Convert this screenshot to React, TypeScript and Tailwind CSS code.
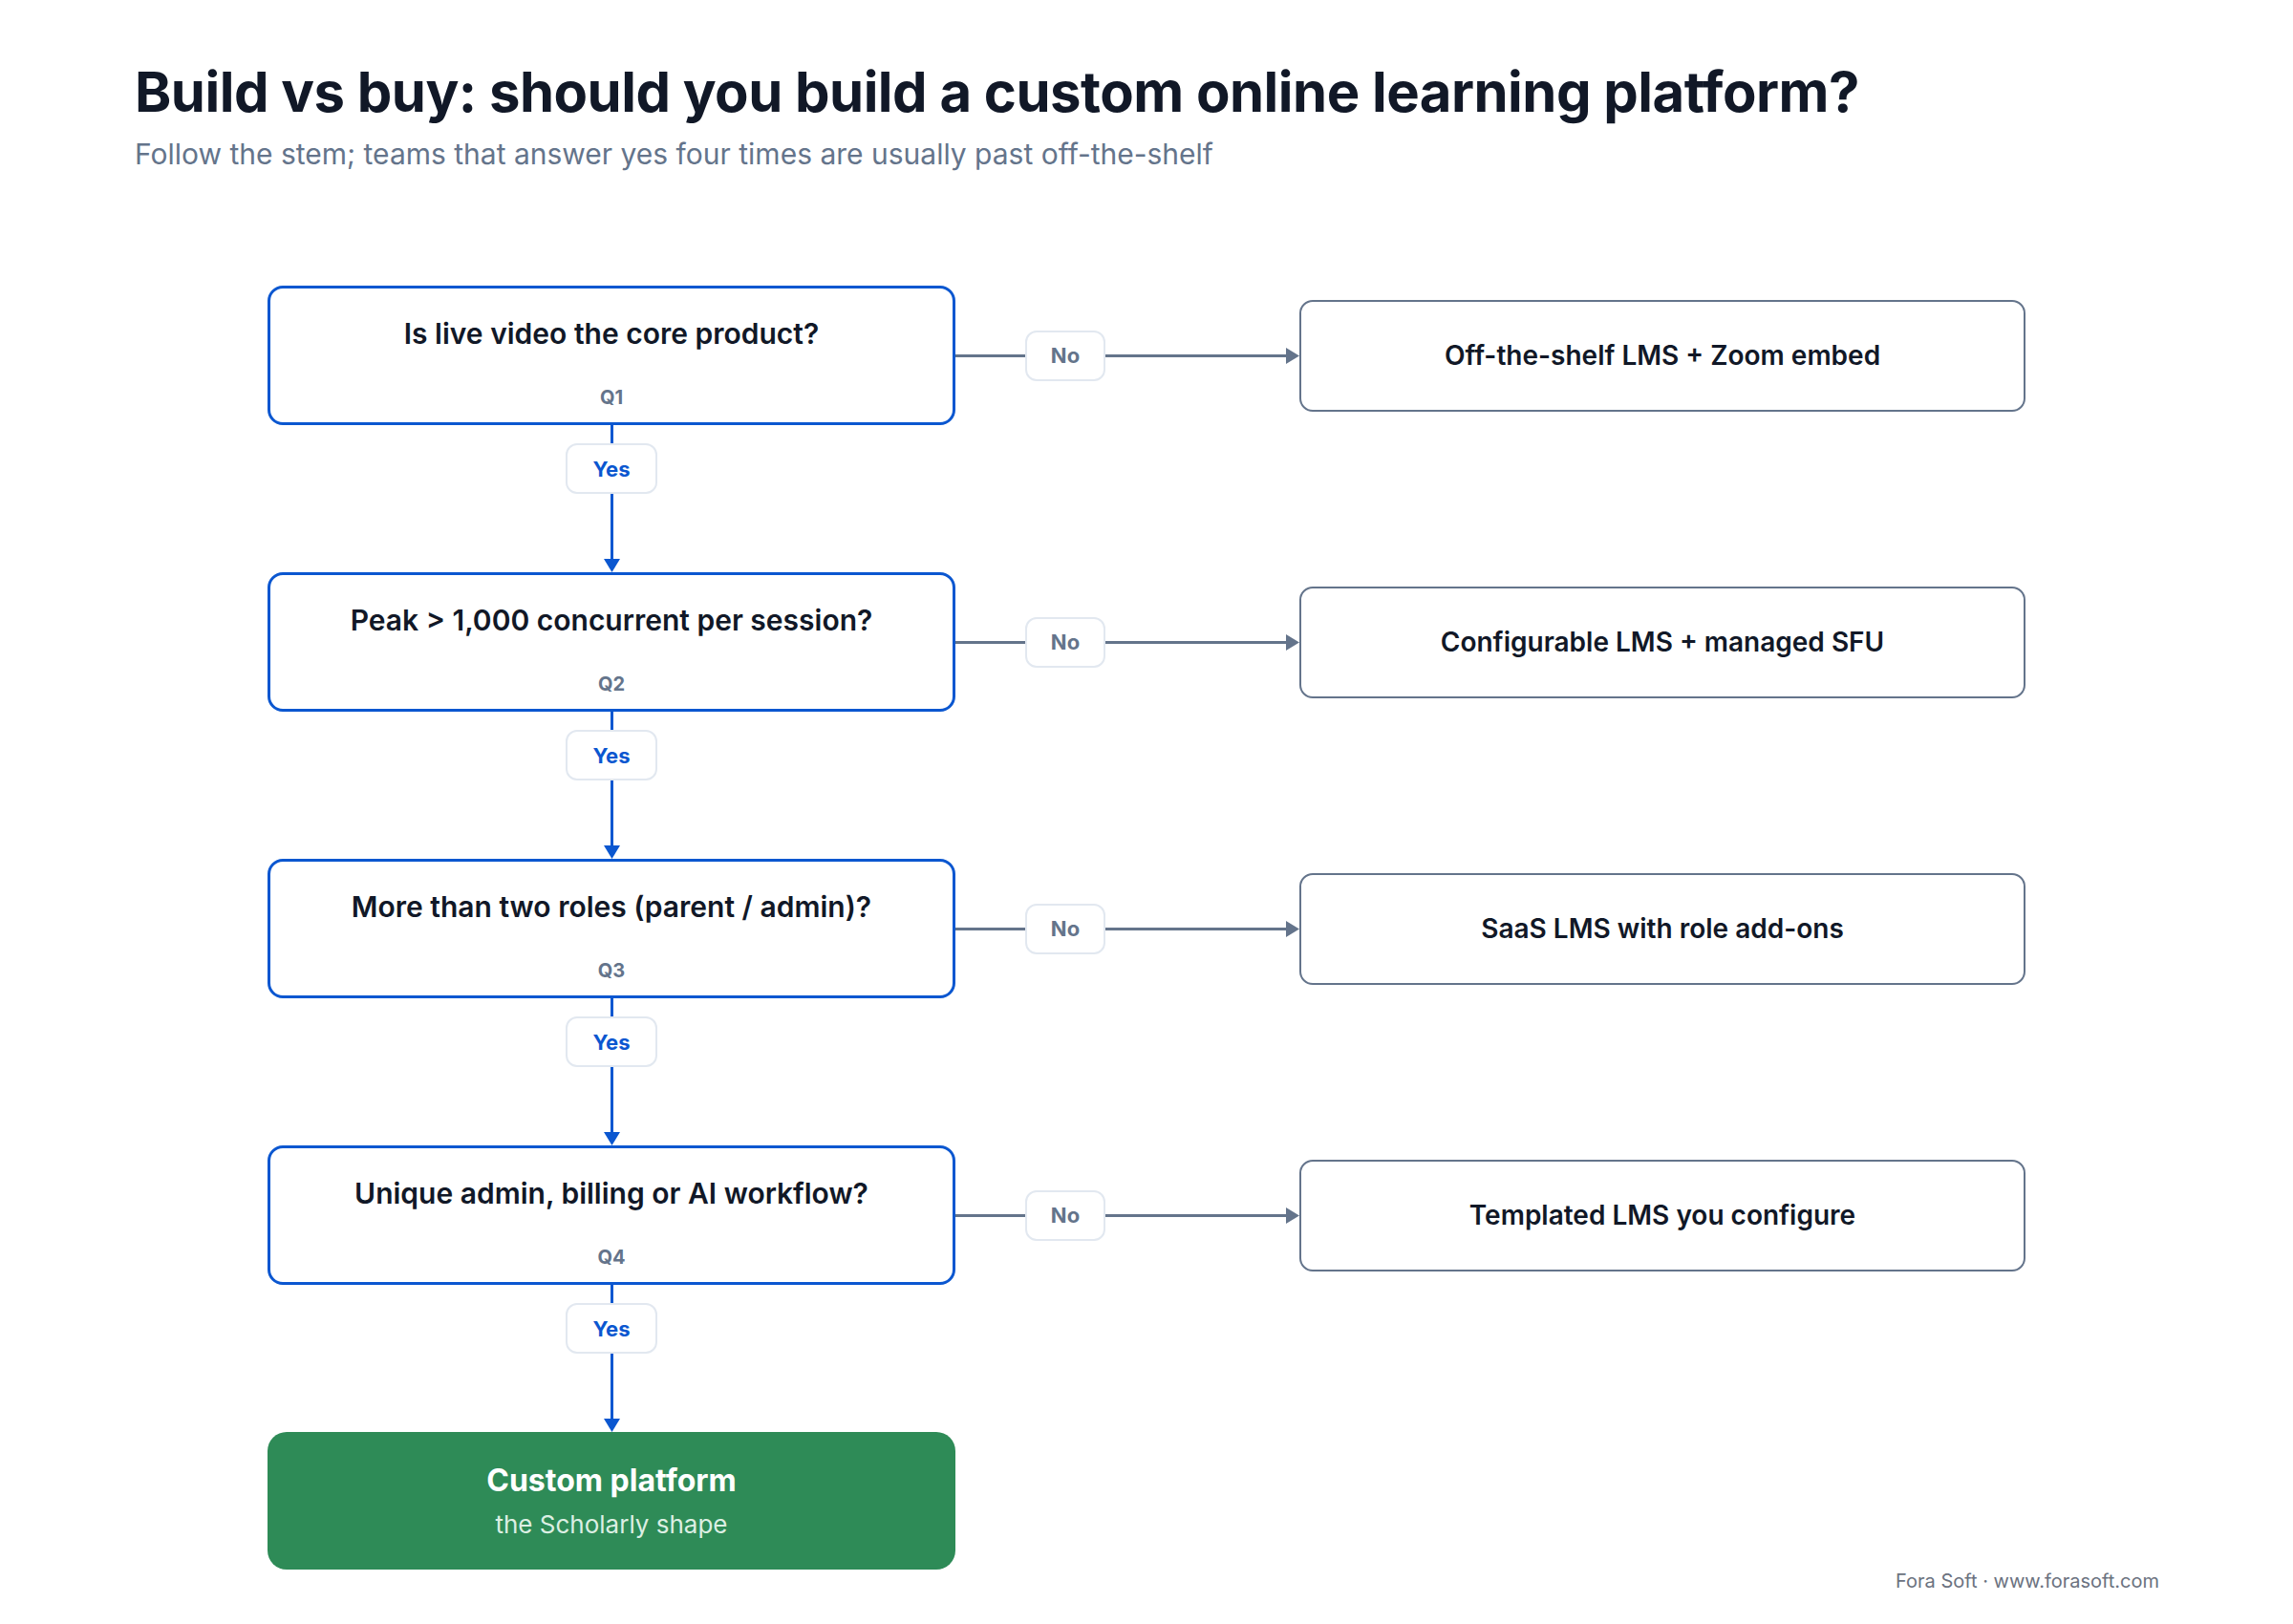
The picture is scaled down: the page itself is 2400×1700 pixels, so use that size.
import React from 'react';

type Step = { q: string; label: string; alt: string };

const steps: Step[] = [
  { q: 'Is live video the core product?', label: 'Q1', alt: 'Off-the-shelf LMS + Zoom embed' },
  { q: 'Peak > 1,000 concurrent per session?', label: 'Q2', alt: 'Configurable LMS + managed SFU' },
  { q: 'More than two roles (parent / admin)?', label: 'Q3', alt: 'SaaS LMS with role add-ons' },
  { q: 'Unique admin, billing or AI workflow?', label: 'Q4', alt: 'Templated LMS you configure' },
];

function NoConnector() {
  return (
    <div className="flex items-center w-[360px]">
      <div className="w-[73px] h-[3px] bg-[#64748b]" />
      <div className="w-[84px] h-[53px] flex items-center justify-center rounded-[12px] border-2 border-[#e2e8f0] bg-white text-[22px] leading-none font-bold text-[#64748b]">
        No
      </div>
      <div className="flex-1 h-[3px] bg-[#64748b]" />
      <svg width="14" height="17" viewBox="0 0 14 17" className="block shrink-0">
        <path d="M0 0 L14 8.5 L0 17 Z" fill="#64748b" />
      </svg>
    </div>
  );
}

function YesConnector() {
  return (
    <div className="flex flex-col items-center w-[720px] h-[154px]">
      <div className="h-[19px] w-[3px] bg-[#0b57d0]" />
      <div className="w-[96px] h-[53px] flex items-center justify-center rounded-[12px] border-2 border-[#e2e8f0] bg-white text-[22px] leading-none font-bold text-[#0b57d0]">
        Yes
      </div>
      <div className="flex-1 w-[3px] bg-[#0b57d0]" />
      <svg width="17" height="14" viewBox="0 0 17 14" className="block shrink-0">
        <path d="M0 0 L17 0 L8.5 14 Z" fill="#0b57d0" />
      </svg>
    </div>
  );
}

export default function App() {
  return (
    <div className="w-[2400px] h-[1700px] bg-white font-['Inter','Liberation_Sans',sans-serif] text-[#0f172a]">
      <div className="pl-[141px] pt-[67px]">
        <h1 className="text-[58px] leading-[58px] font-bold tracking-[-0.5px] text-[#111827]">
          Build vs buy: should you build a custom online learning platform?
        </h1>
        <p className="mt-[21px] text-[30px] leading-[30px] text-[#64748b]">
          Follow the stem; teams that answer yes four times are usually past off-the-shelf
        </p>
      </div>

      <div className="ml-[280px] mt-[123px] flex flex-col">
        {steps.map((s) => (
          <div key={s.label} className="flex flex-col">
            <div className="flex items-center">
              <div className="w-[720px] h-[146px] shrink-0 rounded-[16px] border-[3px] border-[#0b57d0] bg-white flex flex-col items-center justify-between pt-[29px] pb-[16px]">
                <div className="text-[30px] leading-[36px] font-semibold text-[#111827]">{s.q}</div>
                <div className="text-[20px] leading-[20px] font-bold text-[#64748b]">{s.label}</div>
              </div>
              <NoConnector />
              <div className="w-[760px] h-[117px] shrink-0 rounded-[14px] border-2 border-[#64748b] bg-white flex items-center justify-center text-[28px] font-semibold text-[#111827]">
                {s.alt}
              </div>
            </div>
            <YesConnector />
          </div>
        ))}
        <div className="w-[720px] h-[144px] rounded-[20px] bg-[#2e8b57] flex flex-col items-center justify-center gap-[11px]">
          <div className="text-[32px] leading-[38px] font-bold text-white">Custom platform</div>
          <div className="text-[26px] leading-[32px] text-[#dcefe3]">the Scholarly shape</div>
        </div>
      </div>

      <div className="flex justify-end pr-[140px]">
        <span className="text-[20px] leading-[24px] text-[#6b7280]">Fora Soft · www.forasoft.com</span>
      </div>
    </div>
  );
}
